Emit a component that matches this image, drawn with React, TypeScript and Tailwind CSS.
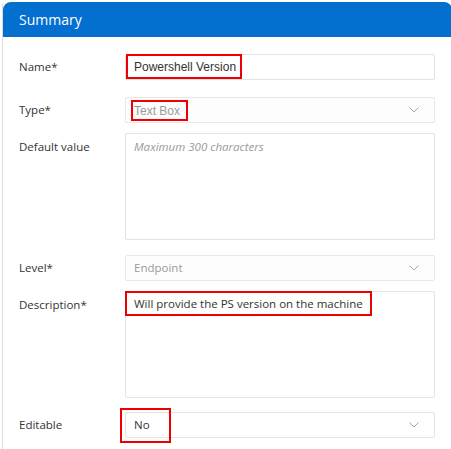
import React from "react";

const Chevron = () => (
      <svg width="10" height="6" viewBox="0 0 10 6" className="absolute right-[15px] top-1/2 -translate-y-1/2">
            <path d="M0.5 0.5 L5 5 L9.5 0.5" fill="none" stroke="#a8a8a8" strokeWidth="1" />
      </svg>
);

const Label = ({ children, top }: { children: React.ReactNode; top?: boolean }) => (
      <div className={`w-[106px] shrink-0 text-[11.5px] text-[#333] whitespace-nowrap ${top ? "pt-[5px]" : "self-center"}`}>{children}</div>
);

const App = () => {
      return (
            <div className="w-[451px] h-[449px] bg-white overflow-hidden font-['Open_Sans',sans-serif]">
                  <div className="ml-[2px] mt-[2px] w-[460px] h-[460px] border-l border-[#dcdcdc] rounded-tl-[4px]">
                        {/* ===== header ===== */}
                        <div className="h-[35px] bg-[#036fcf] rounded-t-[8px] flex items-center pl-[16px] text-white text-[14px] w-[449px]">
                              Summary
                        </div>

                        <div className="pl-[16px] pr-[17px] w-[449px]">
                              {/* Name */}
                              <div className="flex mt-[17px]">
                                    <Label>Name*</Label>
                                    <div className="relative flex-1 h-[26px] border border-[#e3e3e3] rounded-[2px]">
                                          <span className="absolute left-[0px] top-[-1px] h-[25px] w-[116px] border-2 border-[#ee0000] flex items-center pl-[6px] text-[12px] text-[#333] whitespace-nowrap font-['Liberation_Sans',sans-serif]">
                                                Powershell Version
                                          </span>
                                    </div>
                              </div>

                              {/* Type */}
                              <div className="flex mt-[17px]">
                                    <Label>Type*</Label>
                                    <div className="relative flex-1 h-[26px] border border-[#e8e8e8] rounded-[2px] bg-[#fdfdfd]">
                                          <span className="absolute left-[5px] top-[2px] h-[21px] w-[57px] border-2 border-[#ee0000] flex items-center pl-[1px] text-[12px] text-[#9a9a9a] whitespace-nowrap font-['Liberation_Sans',sans-serif]">
                                                Text Box
                                          </span>
                                          <Chevron />
                                    </div>
                              </div>

                              {/* Default value */}
                              <div className="flex mt-[10px]">
                                    <Label top>Default value</Label>
                                    <div className="flex-1 h-[107px] border border-[#e3e3e3] rounded-[2px] px-[8px] pt-[4px] text-[11.5px] italic text-[#9a9a9a]">
                                          Maximum 300 characters
                                    </div>
                              </div>

                              {/* Level */}
                              <div className="flex mt-[15px]">
                                    <Label>Level*</Label>
                                    <div className="relative flex-1 h-[26px] border border-[#e8e8e8] rounded-[2px] bg-[#fdfdfd] flex items-center pl-[8px] text-[11.5px] text-[#9a9a9a]">
                                          Endpoint
                                          <Chevron />
                                    </div>
                              </div>

                              {/* Description */}
                              <div className="flex mt-[10px]">
                                    <Label top>Description*</Label>
                                    <div className="relative flex-1 h-[107px] border border-[#e3e3e3] rounded-[2px]">
                                          <span className="absolute left-[-1px] top-[-1px] h-[25px] w-[247px] border-2 border-[#ee0000] flex items-center pl-[7px] text-[11.5px] text-[#333] whitespace-nowrap">
                                                Will provide the PS version on the machine
                                          </span>
                                    </div>
                              </div>

                              {/* Editable */}
                              <div className="flex mt-[14px]">
                                    <Label>Editable</Label>
                                    <div className="relative flex-1 h-[26px] border border-[#e3e3e3] rounded-[2px] flex items-center pl-[8px] text-[11.5px] text-[#333]">
                                          No
                                          <span className="absolute left-[-6px] top-[-5px] w-[51px] h-[35px] border-2 border-[#ee0000]" />
                                          <Chevron />
                                    </div>
                              </div>
                        </div>
                  </div>
            </div>
      );
};

export default App;
